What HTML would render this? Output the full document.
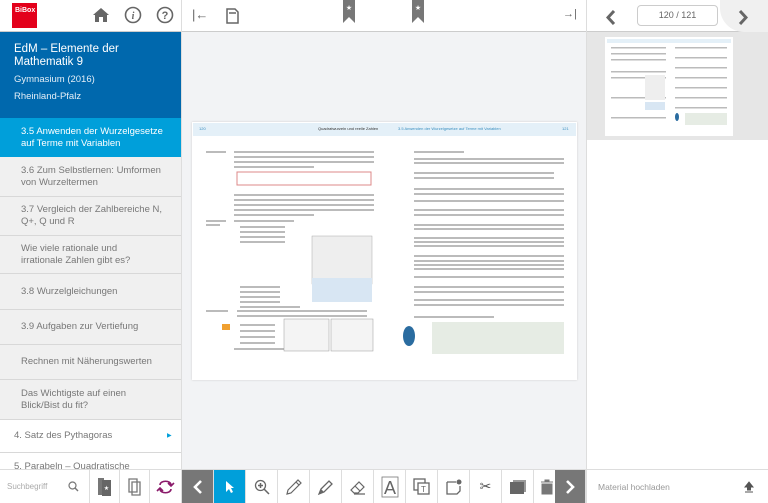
<!DOCTYPE html>
<html><head><meta charset="utf-8"><style>
*{box-sizing:border-box;margin:0;padding:0}
body{width:768px;height:503px;overflow:hidden;position:relative;background:#f2f3f5;font-family:"Liberation Sans",sans-serif;color:#666}
.abs{position:absolute}
#side{left:0;top:0;width:182px;height:503px;background:#f0f0f0;border-right:1px solid #ddd}
.it{position:absolute;left:0;width:181px;border-bottom:1px solid #d8d8d8;font-size:9.5px;line-height:12px;padding-left:21px;display:flex;align-items:center;color:#777}
.tb{position:absolute;top:470px;height:33px;border-right:1px solid #ddd;background:#fff;display:flex;align-items:center;justify-content:center}
</style></head><body>
<div class="abs" style="left:0;top:0;width:768px;height:32px;background:#fff;border-bottom:1px solid #ccc"></div>
<div class="abs" style="left:12px;top:3px;width:25px;height:25px;background:#e3001b;color:#fff;font-size:7px;font-weight:bold;padding:4px 0 0 3px">BiBox</div>
<svg class="abs" style="left:92px;top:7px" width="18" height="16" viewBox="0 0 18 16"><path d="M1 8 L9 1 L17 8 L15 8 L15 15 L11 15 L11 10 L7 10 L7 15 L3 15 L3 8Z" fill="#666"/></svg>
<svg class="abs" style="left:124px;top:6px" width="18" height="18"><circle cx="9" cy="9" r="7.5" fill="none" stroke="#666" stroke-width="1.6"/><text x="9" y="13" font-size="10" font-style="italic" font-weight="bold" fill="#666" text-anchor="middle" font-family="Liberation Serif">i</text></svg>
<svg class="abs" style="left:156px;top:6px" width="18" height="18"><circle cx="9" cy="9" r="7.5" fill="none" stroke="#666" stroke-width="1.6"/><text x="9" y="13" font-size="11" font-weight="bold" fill="#666" text-anchor="middle">?</text></svg>
<div class="abs" style="left:181px;top:0;width:1px;height:32px;background:#ddd"></div>
<div class="abs" style="left:192px;top:7px;font-size:13px;color:#666">|←</div>
<svg class="abs" style="left:226px;top:8px" width="13" height="16"><path d="M1 1 H9 L12 4 V15 H1Z M3 5 H10" fill="none" stroke="#666" stroke-width="1.5"/></svg>
<svg class="abs" style="left:343px;top:0" width="12" height="23"><path d="M0 0 H12 V23 L6 17 L0 23Z" fill="#777"/><text x="6" y="10" font-size="7" fill="#fff" text-anchor="middle">★</text></svg>
<svg class="abs" style="left:412px;top:0" width="12" height="23"><path d="M0 0 H12 V23 L6 17 L0 23Z" fill="#777"/><text x="6" y="10" font-size="7" fill="#fff" text-anchor="middle">★</text></svg>
<div class="abs" style="left:563px;top:8px;font-size:11px;color:#666">→|</div>
<div class="abs" style="left:586px;top:0;width:1px;height:503px;background:#ddd"></div>
<svg class="abs" style="left:606px;top:10px" width="10" height="15"><path d="M8 1 L2 7.5 L8 14" fill="none" stroke="#666" stroke-width="3"/></svg>
<div class="abs" style="left:637px;top:5px;width:81px;height:21px;border:1px solid #ccc;border-radius:4px;font-size:9px;text-align:center;line-height:19px;color:#666">120 / 121</div>
<div class="abs" style="left:720px;top:0;width:48px;height:32px;background:#f0f0f0;border-radius:0 0 0 24px"></div>
<svg class="abs" style="left:738px;top:10px" width="10" height="15"><path d="M2 1 L8 7.5 L2 14" fill="none" stroke="#666" stroke-width="3"/></svg>

<div class="abs" id="side" style="top:32px;height:438px"></div>
<div class="abs" style="left:0;top:32px;width:181px;height:86px;background:#0068ad;color:#fff;padding:11px 0 0 14px">
<div style="font-size:11.5px;line-height:13px">EdM – Elemente der<br>Mathematik 9</div>
<div style="font-size:9.5px;margin-top:5px;color:#e3eef7">Gymnasium (2016)</div>
<div style="font-size:9.5px;margin-top:6px;color:#e3eef7">Rheinland-Pfalz</div></div>
<div class="it" style="top:118px;height:39px;background:#009fda;color:#fff;border:none">3.5 Anwenden der Wurzelgesetze<br>auf Terme mit Variablen</div>
<div class="it" style="top:157px;height:40px">3.6 Zum Selbstlernen: Umformen<br>von Wurzeltermen</div>
<div class="it" style="top:197px;height:39px">3.7 Vergleich der Zahlbereiche N,<br>Q+, Q und R</div>
<div class="it" style="top:236px;height:38px">Wie viele rationale und<br>irrationale Zahlen gibt es?</div>
<div class="it" style="top:274px;height:36px">3.8 Wurzelgleichungen</div>
<div class="it" style="top:310px;height:35px">3.9 Aufgaben zur Vertiefung</div>
<div class="it" style="top:345px;height:35px">Rechnen mit Näherungswerten</div>
<div class="it" style="top:380px;height:40px">Das Wichtigste auf einen<br>Blick/Bist du fit?</div>
<div class="it" style="top:420px;height:33px;background:#fff;padding-left:14px">4. Satz des Pythagoras<span style="position:absolute;left:167px;color:#009fda;font-size:6px">▶</span></div>
<div class="it" style="top:453px;height:17px;background:#fff;padding-left:14px;align-items:flex-start;padding-top:8px;overflow:hidden">5. Parabeln – Quadratische</div>

<div class="abs" style="left:192px;top:122px;width:385px;height:258px;background:#fff;box-shadow:0 0 2px #ccc"></div>
<div class="abs" style="left:193px;top:123px;width:383px;height:13px;background:#e4f0f8"></div>
<div class="abs" style="left:199px;top:126px;font-size:4px;color:#3a8fc0">120</div>
<div class="abs" style="left:318px;top:126px;font-size:4px;color:#333">Quadratwurzeln und reelle Zahlen</div>
<div class="abs" style="left:398px;top:126px;font-size:4px;color:#3a8fc0">3.5 Anwenden der Wurzelgesetze auf Terme mit Variablen</div>
<div class="abs" style="left:562px;top:126px;font-size:4px;color:#3a8fc0">121</div>
<svg class="abs" style="left:192px;top:136px" width="385" height="244">
<g fill="#bbb">
<rect x="42" y="15" width="140" height="2"/><rect x="42" y="20" width="140" height="2"/><rect x="42" y="25" width="140" height="2"/><rect x="42" y="30" width="80" height="2"/>
<rect x="14" y="15" width="20" height="2"/>
<rect x="42" y="58" width="140" height="2"/><rect x="42" y="63" width="140" height="2"/><rect x="42" y="68" width="140" height="2"/><rect x="42" y="73" width="140" height="2"/><rect x="42" y="78" width="80" height="2"/>
<rect x="14" y="84" width="20" height="2"/><rect x="14" y="88" width="14" height="2"/>
<rect x="42" y="84" width="60" height="2"/><rect x="48" y="90" width="45" height="2"/><rect x="48" y="95" width="45" height="2"/><rect x="48" y="100" width="45" height="2"/><rect x="48" y="105" width="45" height="2"/>
<rect x="48" y="150" width="40" height="2"/><rect x="48" y="155" width="40" height="2"/><rect x="48" y="160" width="40" height="2"/><rect x="48" y="165" width="40" height="2"/><rect x="48" y="170" width="60" height="2"/>
<rect x="14" y="174" width="22" height="2"/><rect x="45" y="174" width="130" height="2"/><rect x="45" y="179" width="130" height="2"/>
<rect x="48" y="188" width="35" height="2"/><rect x="48" y="194" width="35" height="2"/><rect x="48" y="200" width="35" height="2"/><rect x="48" y="206" width="35" height="2"/><rect x="42" y="212" width="70" height="2"/>
<rect x="222" y="15" width="50" height="2"/><rect x="222" y="22" width="150" height="2"/><rect x="222" y="26" width="150" height="2"/>
<rect x="222" y="36" width="140" height="2"/><rect x="222" y="41" width="140" height="2"/>
<rect x="222" y="52" width="150" height="2"/><rect x="222" y="57" width="150" height="2"/><rect x="222" y="64" width="150" height="2"/><rect x="222" y="73" width="150" height="2"/><rect x="222" y="78" width="150" height="2"/>
<rect x="222" y="88" width="150" height="2"/><rect x="222" y="92" width="150" height="2"/><rect x="222" y="101" width="150" height="2"/><rect x="222" y="105" width="150" height="2"/><rect x="222" y="109" width="150" height="2"/>
<rect x="222" y="119" width="150" height="2"/><rect x="222" y="124" width="150" height="2"/><rect x="222" y="128" width="150" height="2"/><rect x="222" y="132" width="150" height="2"/><rect x="222" y="140" width="150" height="2"/>
<rect x="222" y="150" width="150" height="2"/><rect x="222" y="155" width="150" height="2"/><rect x="222" y="163" width="150" height="2"/><rect x="222" y="168" width="150" height="2"/><rect x="222" y="180" width="80" height="2"/>
</g>
<rect x="45" y="36" width="134" height="13" fill="none" stroke="#d88" stroke-width="1"/>
<rect x="120" y="100" width="60" height="48" fill="#eee" stroke="#aaa" stroke-width=".5"/>
<rect x="120" y="142" width="60" height="24" fill="#d8e6f3"/>
<rect x="92" y="183" width="45" height="32" fill="#f4f4f4" stroke="#999" stroke-width=".5"/>
<rect x="139" y="183" width="42" height="32" fill="#f4f4f4" stroke="#999" stroke-width=".5"/>
<rect x="240" y="186" width="132" height="32" fill="#e6ece4"/>
<ellipse cx="217" cy="200" rx="6" ry="10" fill="#2a6ca0"/>
<rect x="30" y="188" width="8" height="6" fill="#f0a030"/>
</svg>

<div class="abs" style="left:587px;top:32px;width:181px;height:108px;background:#e6e6e6"></div>
<div class="abs" style="left:605px;top:37px;width:128px;height:99px;background:#fff"></div>
<svg class="abs" style="left:605px;top:37px" width="128" height="99"><rect x="2" y="2" width="124" height="4" fill="#e4f0f8"/><g fill="#bbb"><rect x="6" y="10" width="55" height="1.5"/><rect x="6" y="16" width="55" height="1.5"/><rect x="6" y="22" width="55" height="1.5"/><rect x="6" y="34" width="55" height="1.5"/><rect x="6" y="40" width="55" height="1.5"/><rect x="6" y="60" width="55" height="1.5"/><rect x="6" y="80" width="55" height="1.5"/><rect x="70" y="10" width="52" height="1.5"/><rect x="70" y="20" width="52" height="1.5"/><rect x="70" y="30" width="52" height="1.5"/><rect x="70" y="40" width="52" height="1.5"/><rect x="70" y="50" width="52" height="1.5"/><rect x="70" y="60" width="52" height="1.5"/><rect x="70" y="70" width="52" height="1.5"/></g><rect x="40" y="38" width="20" height="25" fill="#eee"/><rect x="40" y="65" width="20" height="8" fill="#d8e6f3"/><rect x="80" y="76" width="42" height="12" fill="#e6ece4"/><ellipse cx="72" cy="80" rx="2" ry="4" fill="#2a6ca0"/></svg>
<div class="abs" style="left:587px;top:140px;width:181px;height:330px;background:#fff"></div>

<div class="abs" style="left:0;top:469px;width:768px;height:1px;background:#ddd"></div>
<div class="tb" style="left:0;width:90px;justify-content:space-between;padding:0 10px 0 7px;font-size:8px;color:#aaa">Suchbegriff<svg width="11" height="11"><circle cx="4.5" cy="4.5" r="3.5" fill="none" stroke="#777" stroke-width="1.2"/><path d="M7 7 L10 10" stroke="#777" stroke-width="1.4"/></svg></div>
<div class="tb" style="left:90px;width:30px"><svg width="16" height="20"><rect x="1" y="1" width="6" height="17" fill="#777"/><rect x="5" y="3" width="9" height="16" fill="#666"/><text x="9.5" y="13" font-size="6" fill="#fff" text-anchor="middle">★</text></svg></div>
<div class="tb" style="left:120px;width:30px"><svg width="16" height="18"><path d="M2 1 H10 V14 H2Z M5 4 H13 V17 H5Z" fill="#fff" stroke="#777" stroke-width="1.3"/></svg></div>
<div class="tb" style="left:150px;width:32px"><svg width="20" height="18"><path d="M4 7 C4 2 15 2 15 7 M15 11 C15 16 4 16 4 11" fill="none" stroke="#8a1a6a" stroke-width="1.6"/><path d="M12 5 L15 8 L18 5 M1 13 L4 10 L7 13" fill="none" stroke="#8a1a6a" stroke-width="1.6"/></svg></div>
<div class="tb" style="left:182px;width:32px;background:#777"><svg width="10" height="14"><path d="M8 1 L2 7 L8 13" fill="none" stroke="#fff" stroke-width="2.6"/></svg></div>
<div class="tb" style="left:214px;width:32px;background:#009fda"><svg width="10" height="14"><path d="M1 1 L1 12 L4 9 L6 13 L8 12 L6 8 L9 8Z" fill="#fff"/></svg></div>
<div class="tb" style="left:246px;width:32px"><svg width="16" height="16"><circle cx="6.5" cy="6.5" r="5" fill="none" stroke="#666" stroke-width="1.3"/><path d="M4 6.5 H9 M6.5 4 V9 M10 10 L15 15" stroke="#666" stroke-width="1.5"/></svg></div>
<div class="tb" style="left:278px;width:32px"><svg width="18" height="18"><path d="M2 16 L3 12 L13 2 L16 5 L6 15Z M11 4 L14 7" fill="none" stroke="#666" stroke-width="1.2"/></svg></div>
<div class="tb" style="left:310px;width:32px"><svg width="18" height="18"><path d="M2 16 L4 11 L12 3 L15 6 L7 14Z" fill="none" stroke="#666" stroke-width="1.3"/><path d="M2 16 L4 11 L7 14Z" fill="#666"/></svg></div>
<div class="tb" style="left:342px;width:32px"><svg width="18" height="18"><path d="M2 12 L10 4 L15 9 L9 15 L5 15Z M6 8 L11 13 M5 16 H16" fill="none" stroke="#666" stroke-width="1.2"/></svg></div>
<div class="tb" style="left:374px;width:32px"><svg width="22" height="24"><rect x="3" y="2" width="16" height="20" fill="none" stroke="#777" stroke-width=".8"/><text x="11" y="19" font-size="18" fill="#666" text-anchor="middle">A</text></svg></div>
<div class="tb" style="left:406px;width:32px"><svg width="18" height="18"><rect x="1" y="1" width="11" height="11" fill="none" stroke="#666" stroke-width="1.3"/><rect x="5" y="5" width="11" height="11" fill="#fff" stroke="#666" stroke-width="1.3"/><text x="10.5" y="14" font-size="8" fill="#666" text-anchor="middle">T</text></svg></div>
<div class="tb" style="left:438px;width:32px"><svg width="18" height="18"><path d="M2 4 H11 M2 4 V16 H12 L15 13 V8" fill="none" stroke="#666" stroke-width="1.3"/><circle cx="14" cy="4" r="2.5" fill="#666"/></svg></div>
<div class="tb" style="left:470px;width:32px;font-size:14px;color:#555">✂</div>
<div class="tb" style="left:502px;width:32px"><svg width="18" height="16"><rect x="4" y="1" width="13" height="12" fill="#999"/><rect x="1" y="3" width="14" height="12" fill="#666"/></svg></div>
<div class="tb" style="left:534px;width:22px;justify-content:flex-start;padding-left:6px"><svg width="14" height="16"><path d="M1 3 H13 M5 3 V1 H9 V3 M2 5 H12 V15 H2Z" fill="#777" stroke="#777"/></svg></div>
<div class="tb" style="left:555px;width:31px;background:#777"><svg width="10" height="14"><path d="M2 1 L8 7 L2 13" fill="none" stroke="#fff" stroke-width="2.6"/></svg></div>
<div class="tb" style="left:587px;width:181px;justify-content:space-between;padding:0 14px 0 11px;font-size:8.5px;color:#999;border:none">Material hochladen<svg width="10" height="12"><path d="M5 1 L1 6 H3.5 V9 H6.5 V6 H9Z M1 11 H9" fill="#555" stroke="#555"/></svg></div>
</body></html>
